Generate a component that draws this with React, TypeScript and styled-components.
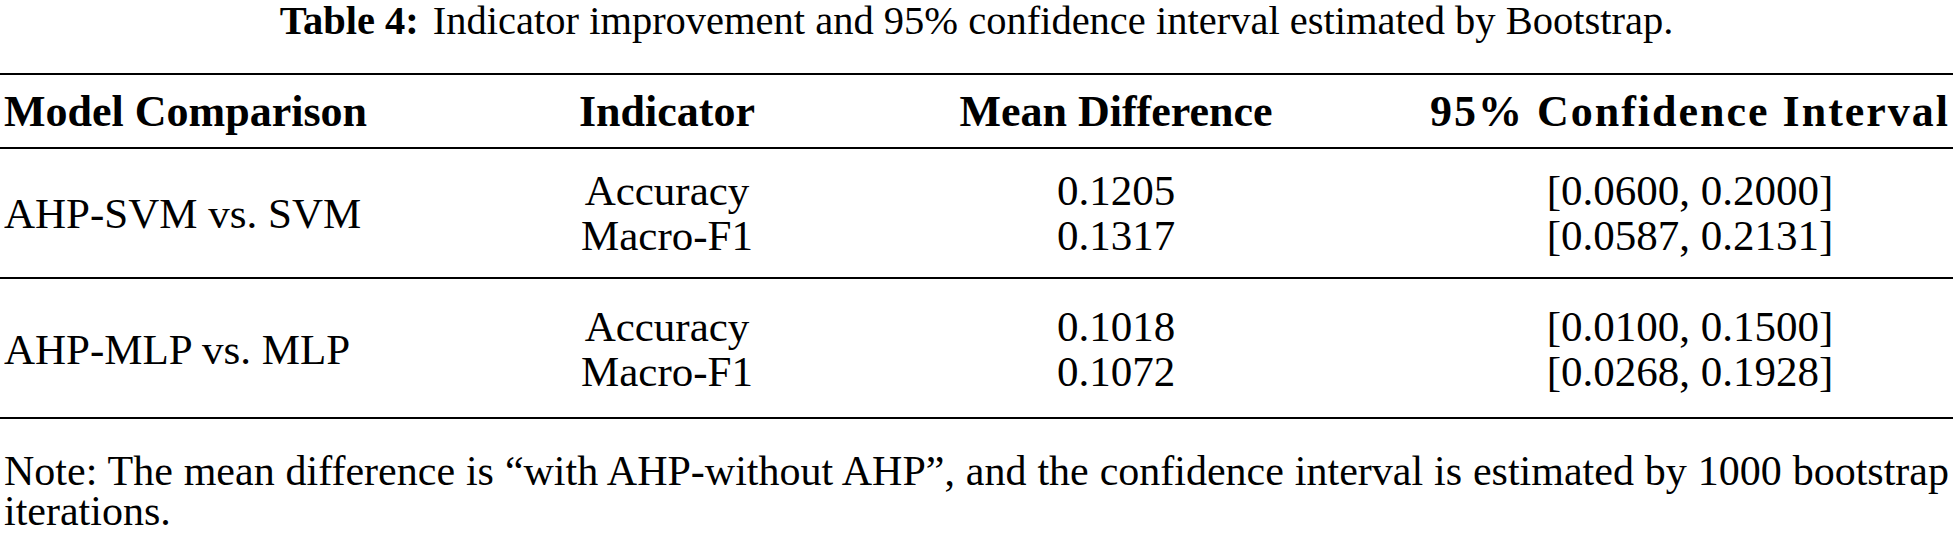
import React from "react";
import styled, { createGlobalStyle } from "styled-components";

const Global = createGlobalStyle`
  html, body { margin: 0; padding: 0; background: #fff; }
  body { font-family: "Liberation Serif", "Times New Roman", serif; color: #000; }
`;

const Page = styled.div`
  width: 1953px;
  display: flex;
  flex-direction: column;
`;

const Caption = styled.div`
  text-align: center;
  font-size: 40.5px;
  line-height: 42px;
  height: 42px;
  white-space: nowrap;
`;

const CaptionLabel = styled.span`
  font-weight: 700;
  margin-right: 14px;
`;

const Table = styled.div`
  margin-top: 31px;
  border-top: 2px solid #000;
  border-bottom: 2px solid #000;
  display: flex;
  flex-direction: column;
`;

const Row = styled.div<{ $divider?: boolean }>`
  display: grid;
  grid-template-columns: 529px 276px 622px 526px;
  align-items: center;
  ${(p) => (p.$divider ? "border-bottom: 2px solid #000;" : "")}
`;

const HeaderRow = styled(Row)`
  height: 72px;
  font-weight: 700;
  font-size: 44px;
`;

const Group = styled(Row)<{ $top: number; $bottom: number }>`
  padding: ${(p) => `${p.$top}px 0 ${p.$bottom}px`};
  font-size: 43px;
`;

const Cell = styled.div<{ $align?: "left" | "center"; $spread?: boolean }>`
  text-align: ${(p) => p.$align ?? "center"};
  padding-left: ${(p) => (p.$align === "left" ? "4px" : "0")};
  letter-spacing: ${(p) => (p.$spread ? "2px" : "normal")};
  white-space: nowrap;
`;

const Stack = styled.div`
  display: flex;
  flex-direction: column;
  align-items: center;
`;

const Line = styled.div`
  height: 45px;
  line-height: 45px;
  white-space: nowrap;
`;

const Note = styled.p`
  margin: 32px 0 0;
  padding: 0 4px 0 4px;
  font-size: 42px;
  line-height: 40px;
  text-align: justify;
`;

type GroupData = {
  label: string;
  top: number;
  bottom: number;
  rows: { indicator: string; mean: string; ci: string }[];
};

const groups: GroupData[] = [
  {
    label: "AHP-SVM vs. SVM",
    top: 19,
    bottom: 19,
    rows: [
      { indicator: "Accuracy", mean: "0.1205", ci: "[0.0600, 0.2000]" },
      { indicator: "Macro-F1", mean: "0.1317", ci: "[0.0587, 0.2131]" },
    ],
  },
  {
    label: "AHP-MLP vs. MLP",
    top: 25,
    bottom: 23,
    rows: [
      { indicator: "Accuracy", mean: "0.1018", ci: "[0.0100, 0.1500]" },
      { indicator: "Macro-F1", mean: "0.1072", ci: "[0.0268, 0.1928]" },
    ],
  },
];

export default function App() {
  return (
    <Page>
      <Global />
      <Caption>
        <CaptionLabel>Table 4:</CaptionLabel>
        Indicator improvement and 95% confidence interval estimated by Bootstrap.
      </Caption>
      <Table>
        <HeaderRow $divider>
          <Cell $align="left">Model Comparison</Cell>
          <Cell>Indicator</Cell>
          <Cell>Mean Difference</Cell>
          <Cell $spread>95% Confidence Interval</Cell>
        </HeaderRow>
        {groups.map((g, i) => (
          <Group
            key={g.label}
            $top={g.top}
            $bottom={g.bottom}
            $divider={i < groups.length - 1}
          >
            <Cell $align="left">{g.label}</Cell>
            <Stack>
              {g.rows.map((r) => (
                <Line key={r.indicator}>{r.indicator}</Line>
              ))}
            </Stack>
            <Stack>
              {g.rows.map((r) => (
                <Line key={r.indicator}>{r.mean}</Line>
              ))}
            </Stack>
            <Stack>
              {g.rows.map((r) => (
                <Line key={r.indicator}>{r.ci}</Line>
              ))}
            </Stack>
          </Group>
        ))}
      </Table>
      <Note>
        Note: The mean difference is “with AHP-without AHP”, and the confidence
        interval is estimated by 1000 bootstrap iterations.
      </Note>
    </Page>
  );
}
